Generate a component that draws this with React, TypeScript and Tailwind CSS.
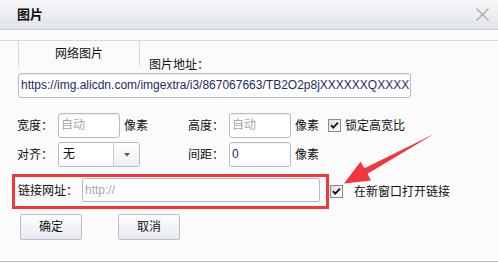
import React from "react";

function Check() {
  return (
    <svg width="13" height="13" viewBox="0 0 13 13" className="shrink-0">
      <defs>
        <linearGradient id="cb" x1="0" y1="0" x2="1" y2="1">
          <stop offset="0" stopColor="#dcdcdc" />
          <stop offset="1" stopColor="#ffffff" />
        </linearGradient>
      </defs>
      <rect x="0.5" y="0.5" width="12" height="12" fill="url(#cb)" stroke="#8a8a8a" />
      <path d="M3 6.2 L5.2 8.6 L10 3.6" fill="none" stroke="#111" strokeWidth="1.8" />
    </svg>
  );
}

function Field({ w, children, muted }: { w: string; children?: React.ReactNode; muted?: boolean }) {
  return (
    <div
      className={`${w} h-[25px] rounded-[3px] border border-[#b4bcc9] bg-white pl-[2px] leading-[23px] overflow-hidden whitespace-nowrap shadow-[inset_0_1px_1px_rgba(0,0,0,0.06)] ${
        muted ? "text-[#a8a8a8]" : "text-[#1d2a63]"
      }`}
    >
      {children}
    </div>
  );
}

function Btn({ children }: { children: React.ReactNode }) {
  return (
    <div className="flex h-[26px] w-[62px] items-center justify-center rounded-[2px] border border-[#b9bfc9] bg-linear-to-b from-[#ffffff] to-[#e6e9ee] text-[12px] text-[#111]">
      {children}
    </div>
  );
}

export default function App() {
  return (
    <div className="relative h-[263px] w-[498px] overflow-hidden bg-[#fbfbfb] font-['Liberation_Sans','Noto_Sans_CJK_SC',sans-serif] text-[12px] text-[#111]">
      <div className="flex h-[262px] flex-col border-b border-[#b9bec6]">
        {/* title bar */}
        <div className="flex h-[30px] shrink-0 items-center justify-between border-b border-[#c5cad2] bg-linear-to-b from-[#f7f8fa] to-[#e0e3e8] pl-[17px] pr-[9px]">
          <span className="text-[13px] font-bold leading-none text-[#111]">图片</span>
          <svg width="13" height="13" viewBox="0 0 13 13">
            <path d="M0.5 0.5L12.5 12.5M12.5 0.5L0.5 12.5" stroke="#aaaaaa" strokeWidth="1.3" />
          </svg>
        </div>

        {/* tab row */}
        <div className="mt-[10px] flex border-t border-[#d5dae1]">
          <div className="ml-[18px] flex h-[25px] w-[122px] items-center justify-center border-x border-[#d5dae1]">
            网络图片
          </div>
          <div className="ml-[9px] mt-[17px] leading-[14px]">图片地址：</div>
        </div>

        {/* url */}
        <div className="ml-[18px] mt-[1px]">
          <Field w="w-[393px]">https://img.alicdn.com/imgextra/i3/867067663/TB2O2p8jXXXXXXQXXXX</Field>
        </div>

        {/* row 1 */}
        <div className="mt-[15px] flex h-[25px] items-center pl-[17px]">
          <div className="flex w-[171px] items-center">
            <span className="w-[41px]">宽度：</span>
            <Field w="w-[62px]" muted>
              自动
            </Field>
            <span className="ml-[4px]">像素</span>
          </div>
          <div className="flex items-center">
            <span className="w-[41px]">高度：</span>
            <Field w="w-[62px]" muted>
              自动
            </Field>
            <span className="ml-[4px] w-[33px]">像素</span>
            <Check />
            <span className="ml-[4px]">锁定高宽比</span>
          </div>
        </div>

        {/* row 2 */}
        <div className="mt-[4px] flex h-[25px] items-center pl-[17px]">
          <div className="flex w-[171px] items-center">
            <span className="w-[41px]">对齐：</span>
            <div className="flex h-[25px] w-[82px] overflow-hidden rounded-[3px] border border-[#b4bcc9] bg-white">
              <div className="flex-1 pl-[4px] leading-[23px]">无</div>
              <div className="flex w-[26px] items-center justify-center border-l border-[#c9ced6] bg-linear-to-b from-[#ffffff] to-[#eceef2]">
                <svg width="6" height="4" viewBox="0 0 6 4">
                  <path d="M0 0H6L3 3.5Z" fill="#555" />
                </svg>
              </div>
            </div>
          </div>
          <div className="flex items-center">
            <span className="w-[41px]">间距：</span>
            <Field w="w-[62px]">0</Field>
            <span className="ml-[4px]">像素</span>
          </div>
        </div>

        {/* link row */}
        <div className="mt-[7px] flex items-center">
          <div className="ml-[12px] flex h-[35px] w-[317px] items-start border-[3px] border-[#f2363a] pl-[3px] pt-[1px]">
            <span className="w-[64px] leading-[26px]">链接网址：</span>
            <div className="h-[24px] w-[238px] rounded-[2px] border border-[#b4bcc9] bg-white pl-[2px] leading-[22px] text-[#a8a8a8]">
              http://
            </div>
          </div>
          <div className="ml-[1px] flex items-center">
            <Check />
            <span className="ml-[11px]">在新窗口打开链接</span>
          </div>
        </div>

        {/* buttons */}
        <div className="ml-[20px] mt-[5px] flex gap-[36px]">
          <Btn>确定</Btn>
          <Btn>取消</Btn>
        </div>
      </div>

      {/* red arrow annotation */}
      <svg className="pointer-events-none absolute left-0 top-0" width="498" height="263" viewBox="0 0 498 263">
        <polygon
          points="434,134 367.5,173.8 371,180.5 344,183.5 360.5,161.8 364.5,168.2"
          fill="#f2363a"
        />
      </svg>
    </div>
  );
}
